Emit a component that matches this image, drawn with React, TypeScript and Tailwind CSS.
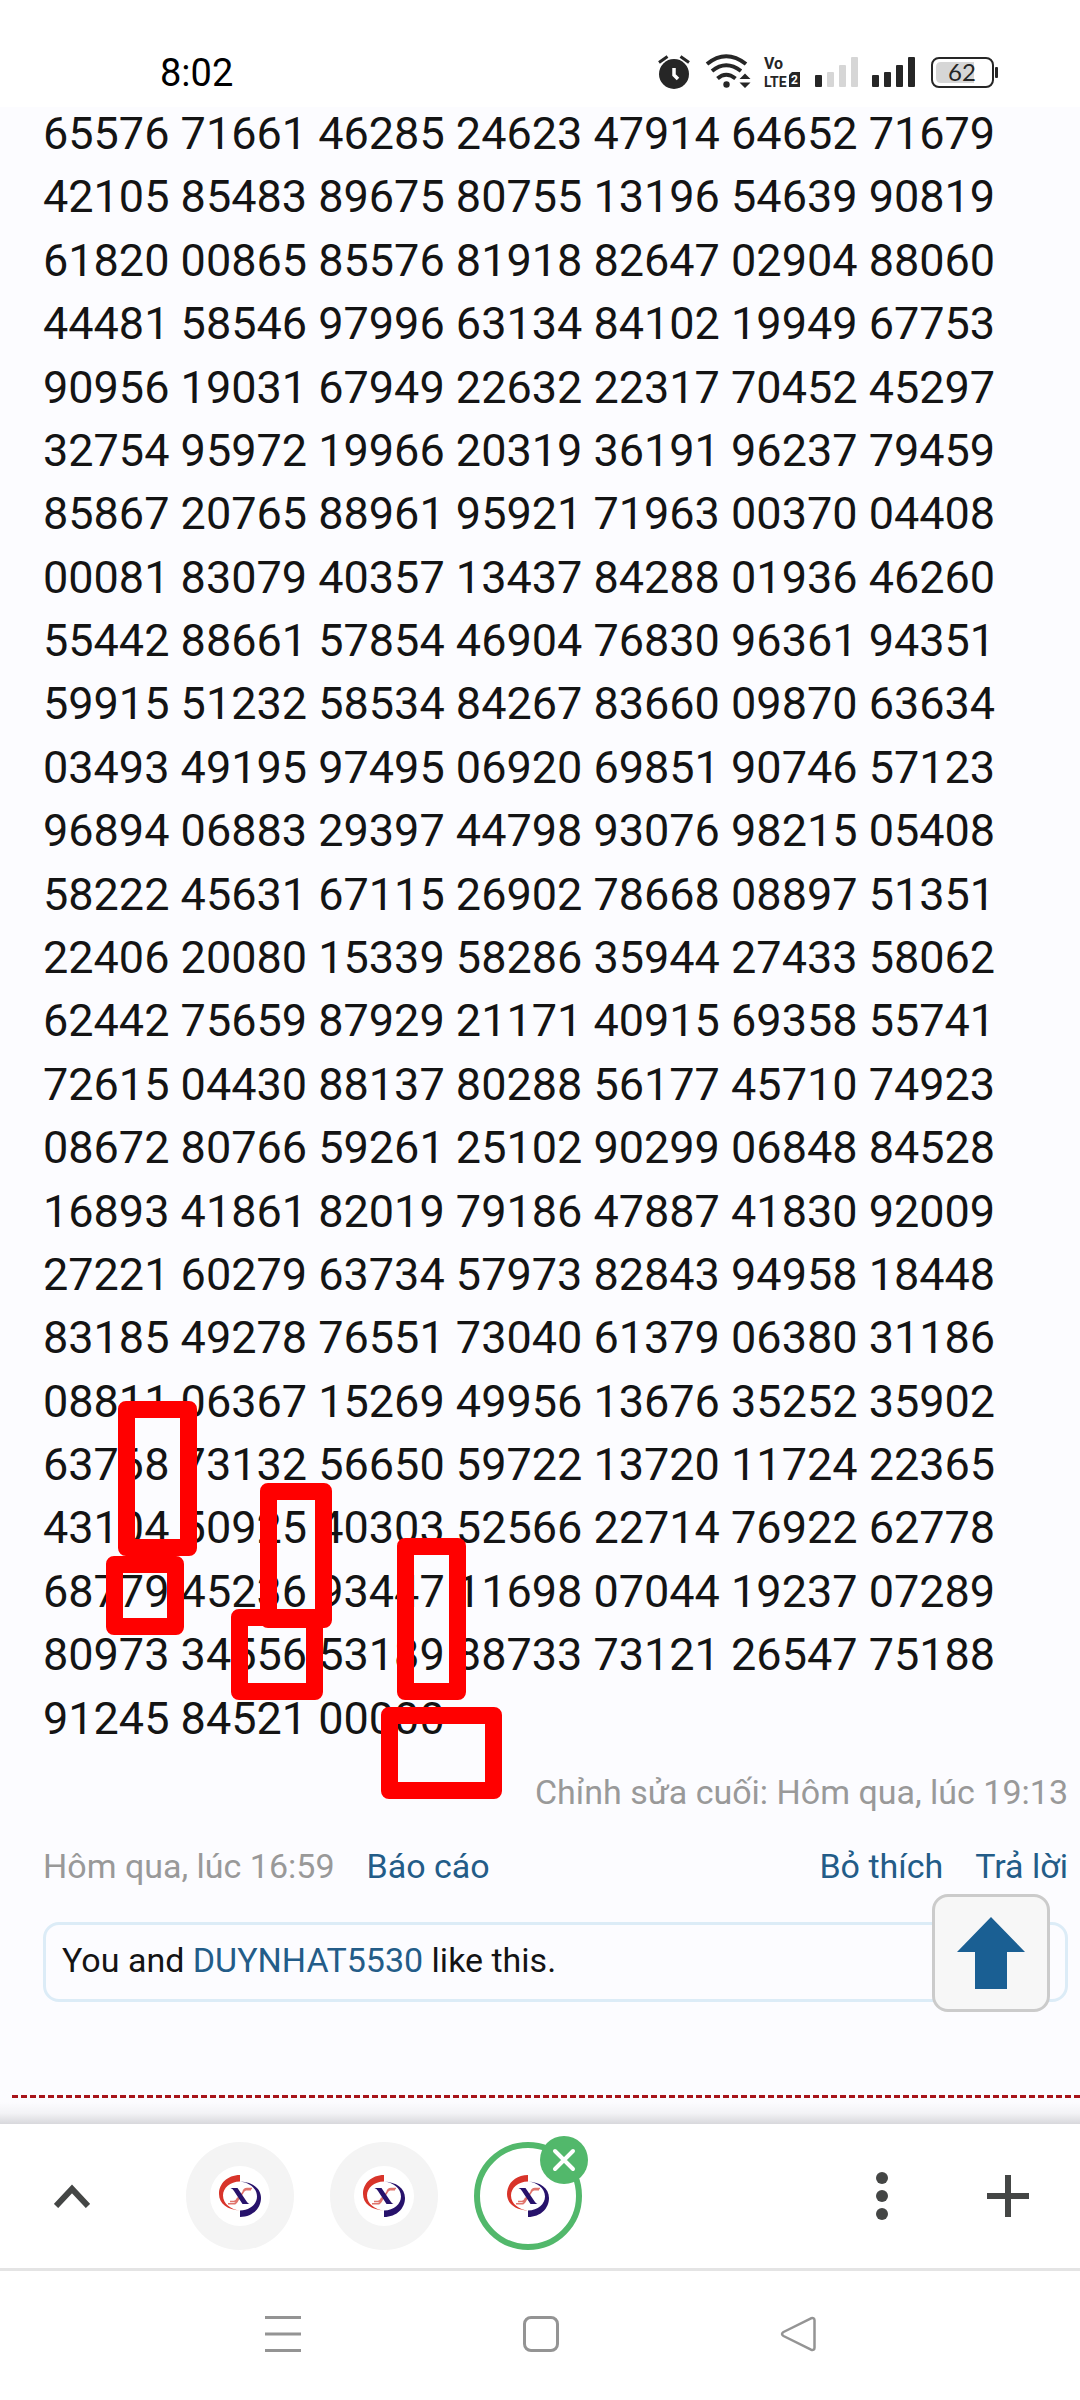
import type { ReactNode } from 'react';

const numberRows = [
    '65576 71661 46285 24623 47914 64652 71679',
    '42105 85483 89675 80755 13196 54639 90819',
    '61820 00865 85576 81918 82647 02904 88060',
    '44481 58546 97996 63134 84102 19949 67753',
    '90956 19031 67949 22632 22317 70452 45297',
    '32754 95972 19966 20319 36191 96237 79459',
    '85867 20765 88961 95921 71963 00370 04408',
    '00081 83079 40357 13437 84288 01936 46260',
    '55442 88661 57854 46904 76830 96361 94351',
    '59915 51232 58534 84267 83660 09870 63634',
    '03493 49195 97495 06920 69851 90746 57123',
    '96894 06883 29397 44798 93076 98215 05408',
    '58222 45631 67115 26902 78668 08897 51351',
    '22406 20080 15339 58286 35944 27433 58062',
    '62442 75659 87929 21171 40915 69358 55741',
    '72615 04430 88137 80288 56177 45710 74923',
    '08672 80766 59261 25102 90299 06848 84528',
    '16893 41861 82019 79186 47887 41830 92009',
    '27221 60279 63734 57973 82843 94958 18448',
    '83185 49278 76551 73040 61379 06380 31186',
    '08811 06367 15269 49956 13676 35252 35902',
    '63768 73132 56650 59722 13720 11724 22365',
    '43104 50925 40303 52566 22714 76922 62778',
    '68779 45236 93447 11698 07044 19237 07289',
    '80973 34556 53189 88733 73121 26547 75188',
    '91245 84521 00000',
];

// Marker boxes drawn by hand over the digits
const markers = [
    'left-[118px] top-[1294px] w-[79px] h-[155px]',
    'left-[106px] top-[1449px] w-[78px] h-[79px]',
    'left-[260px] top-[1376px] w-[72px] h-[145px]',
    'left-[231px] top-[1502px] w-[92px] h-[91px]',
    'left-[397px] top-[1431px] w-[69px] h-[162px]',
    'left-[381px] top-[1600px] w-[121px] h-[92px]',
];

const StatusBar = () => (
    <header className="flex h-[107px] shrink-0 items-start justify-between bg-white pl-40 pr-20 pt-[51px] text-[#262626]">
        <span className="text-[38px] leading-[44px] text-black">8:02</span>
        <svg className="mt-[3px] h-9 w-[344px]" viewBox="656 54 344 36" fill="currentColor" aria-label="Status icons">
            {/* alarm */}
            <circle cx="674" cy="74" r="15" />
            <path d="M659 62.500l8.500-6M689 62.500l-8.500-6" stroke="currentColor" strokeWidth="3" />
            <path d="M674 68v7l4 4" fill="none" stroke="#fff" strokeWidth="3.500" />
            {/* wifi */}
            <g fill="none" stroke="currentColor" strokeWidth="4">
                <path d="M707 64Q726 48.500 746 64" />
                <path d="M712 71Q726 59.500 741 71" />
                <path d="M717.500 78.500Q726 71 735.500 78.500" />
            </g>
            <circle cx="726.500" cy="84.500" r="3.200" />
            <path d="M739.500 79l5.500-5.500 5.500 5.500zM739.500 82.500h11L745 88z" />
            {/* carrier label */}
            <g fontWeight="700" fontFamily="Roboto, sans-serif">
                <text x="764" y="69" fontSize="16">Vo</text>
                <text x="764" y="87" fontSize="14">LTE</text>
                <path d="M792 72h8v15h-11V75z" />
                <text x="791" y="84" fontSize="12" fill="#fff">2</text>
            </g>
            {/* signal 1 */}
            <rect x="815" y="75" width="7" height="12" rx="1" />
            <g fill="#d6d6d6">
                <rect x="827" y="72" width="7" height="15" rx="1" />
                <rect x="839" y="65" width="7" height="22" rx="1" />
                <rect x="851" y="57" width="7" height="30" rx="1" />
            </g>
            {/* signal 2 */}
            <rect x="872" y="75" width="7" height="12" rx="1" />
            <rect x="884" y="72" width="7" height="15" rx="1" />
            <rect x="896" y="65" width="7" height="22" rx="1" />
            <rect x="908" y="57" width="7" height="30" rx="1" />
            {/* battery */}
            <rect x="932" y="58" width="61" height="29" rx="7" fill="none" stroke="currentColor" strokeWidth="2" />
            <path d="M941 62h33v21h-33q-5 0-5-5V67q0-5 5-5z" fill="#d6d6d6" />
            <rect x="995" y="67" width="3" height="11" rx="1" />
            <text x="962" y="81" fontSize="24" textAnchor="middle" fontFamily="Lato, sans-serif">62</text>
        </svg>
    </header>
);

const SiteLogo = () => (
    <svg className="size-[42px]" viewBox="0 0 42 42" aria-hidden="true">
        <path d="M21 0C8 0 0 9 0 19c0 10 9 16 21 16.500C12 34.500 4 29 4 20.500 4 13 11 6.500 21 6.500z" fill="#d8342a" />
        <path d="M21 42c13 0 21-9 21-19C42 13 33 7 21 6.500 30 7.500 38 13 38 21.500 38 29 31 35.500 21 35.500z" fill="#27126b" />
        <path d="M9 28.800h6q2 0 4-4l4-6q2-4 4-4h5M11 26.500h4q2 0 4-4M24 17q1-3.500 4-3.500h5" fill="none" stroke="#e0746c" strokeWidth="1.600" />
        <path d="M11.500 13h7l9.500 14q1 1.500 2.500 2h-7l-8.500-13q-1-2-3.500-3z" fill="#27126b" />
    </svg>
);

const Tab = ({ label, active, children }: { label: string; active?: boolean; children?: ReactNode }) => (
    <div className="relative">
        <button
            type="button"
            aria-label={label}
            className={
                active
                    ? 'flex size-[108px] items-center justify-center rounded-full border-[6px] border-[#52b86b] bg-white'
                    : 'flex size-[108px] items-center justify-center rounded-full bg-[#f4f4f4]'
            }
        >
            <span className="flex size-[60px] items-center justify-center rounded-full bg-white">
                <SiteLogo />
            </span>
        </button>
        {children}
    </div>
);

const App = () => {
    return (
        <div className="flex min-h-screen flex-col bg-[#fcfcff] font-[Roboto,sans-serif] text-[#141414]">
            <StatusBar />

            <main className="relative flex grow flex-col overflow-hidden">
                <div className="grid grow auto-rows-fr pl-[43px] text-[45px] leading-[54px]">
                    {numberRows.map((row) => (
                        <p key={row} className="whitespace-nowrap">{row}</p>
                    ))}
                </div>
                {markers.map((box) => (
                    <div key={box} className={`absolute rounded-lg border-[17px] border-[#ff0000] ${box}`} />
                ))}

                <div className="pl-[43px] pr-3 text-[34px] leading-10">
                    <p className="pt-[17px] text-right text-[#999999]">Chỉnh sửa cuối: Hôm qua, lúc 19:13</p>
                    <div className="mt-[34px] flex justify-between">
                        <div className="flex gap-8">
                            <span className="text-[#999999]">Hôm qua, lúc 16:59</span>
                            <a href="#report" className="text-[#235c88]">Báo cáo</a>
                        </div>
                        <div className="flex gap-8 text-[#235c88]">
                            <a href="#unlike">Bỏ thích</a>
                            <a href="#reply">Trả lời</a>
                        </div>
                    </div>
                    <div className="relative mt-9 rounded-2xl border-[3px] border-[#dcecf7] px-4 pb-[19px] pt-[15px]">
                        You and <a href="#member" className="text-[#235c88]">DUYNHAT5530</a> like this.
                        <button
                            type="button"
                            aria-label="Scroll to top"
                            className="absolute -top-[31px] right-[15px] flex size-[118px] items-center justify-center rounded-2xl border-[3px] border-[#cbcbcb] bg-[#f7f7f7]"
                        >
                            <svg className="h-[72px] w-[68px]" viewBox="0 0 68 72" fill="#1a5f93">
                                <path d="M34 0l34 35H50v37H18V35H0z" />
                            </svg>
                        </button>
                    </div>
                </div>

                <div className="ml-3 mt-[93px] border-t-[3px] border-dashed border-[#a8141a]" />
                <div className="mt-1 h-[22px] bg-linear-to-b from-[#fcfcff] via-[#f3f3f6] to-[#d8d8dc]" />
            </main>

            <div className="flex h-[147px] shrink-0 items-center border-b-[3px] border-[#e4e4e4] bg-white pl-[54px] pr-[51px] text-[#444645]">
                <button type="button" aria-label="Expand tabs">
                    <svg className="h-6 w-9" viewBox="0 0 36 24" fill="none" stroke="currentColor" strokeWidth="6">
                        <path d="M2 22L18 5l16 17" />
                    </svg>
                </button>
                <div className="ml-24 flex gap-9">
                    <Tab label="Tab 1" />
                    <Tab label="Tab 2" />
                    <Tab label="Tab 3" active>
                        <button
                            type="button"
                            aria-label="Close tab"
                            className="absolute -right-[6px] -top-[6px] flex size-12 items-center justify-center rounded-full bg-[#52b86b]"
                        >
                            <svg className="size-6" viewBox="0 0 24 24" stroke="#fff" strokeWidth="4" strokeLinecap="round">
                                <path d="M3 3l18 18M21 3L3 21" />
                            </svg>
                        </button>
                    </Tab>
                </div>
                <div className="ml-auto flex items-center gap-[99px]">
                    <button type="button" aria-label="More options">
                        <svg className="h-12 w-3" viewBox="0 0 12 48" fill="currentColor">
                            <circle cx="6" cy="6" r="6" />
                            <circle cx="6" cy="24" r="6" />
                            <circle cx="6" cy="42" r="6" />
                        </svg>
                    </button>
                    <button type="button" aria-label="New tab">
                        <svg className="size-[42px]" viewBox="0 0 42 42" stroke="currentColor" strokeWidth="6">
                            <path d="M21 0v42M0 21h42" />
                        </svg>
                    </button>
                </div>
            </div>

            <nav className="flex h-[129px] shrink-0 items-center justify-between bg-white pb-1 pl-[265px] pr-[264px]" aria-label="System navigation">
                <button type="button" aria-label="Recent apps">
                    <svg className="size-9" viewBox="0 0 36 36" stroke="#949494" strokeWidth="3">
                        <path d="M0 1.500h36M0 18h36M0 34.500h36" />
                    </svg>
                </button>
                <button type="button" aria-label="Home" className="size-9 rounded-lg border-[3px] border-[#949494]" />
                <button type="button" aria-label="Back">
                    <svg className="size-9" viewBox="0 0 36 36" fill="none" stroke="#949494" strokeWidth="2.500" strokeLinejoin="round">
                        <path d="M31 2.300L3.500 16q-3 2 0 4L31 33.700q3.500 1 3.500-2V4.300q0-3-3.500-2z" />
                    </svg>
                </button>
            </nav>
        </div>
    );
};

export default App;
